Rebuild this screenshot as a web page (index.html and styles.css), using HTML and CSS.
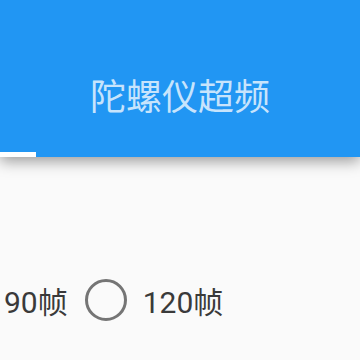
FILE: index.html
```html
<!DOCTYPE html>
<html lang="zh-CN">
<head>
    <meta charset="UTF-8">
    <meta name="viewport" content="width=device-width, initial-scale=1.0">
    <title>陀螺仪超频</title>
    <link rel="stylesheet" href="styles.css">
</head>
<body>
    <div class="appbar">
        <div class="title">陀螺仪超频</div>
        <div class="tabs">
            <div class="indicator"></div>
        </div>
    </div>

    <div class="options">
        <span class="label">90帧</span>
        <span class="radio"></span>
        <span class="label">120帧</span>
    </div>
</body>
</html>
```

FILE: styles.css
```css
html, body {
    margin: 0;
    padding: 0;
}
body {
    width: 360px;
    height: 360px;
    overflow: hidden;
    background-color: #fafafa;
    font-family: Roboto, "Noto Sans CJK SC", sans-serif;
}
.appbar {
    height: 157px;
    display: flex;
    flex-direction: column;
    background-color: #2196f3;
    box-shadow: 0 4px 14px rgba(0, 0, 0, 0.4);
    position: relative;
}
.title {
    flex: 1;
    display: flex;
    align-items: center;
    justify-content: center;
    padding-top: 36px;
    font-size: 36px;
    color: rgba(255, 255, 255, 0.75);
}
.tabs {
    height: 5px;
}
.indicator {
    width: 36px;
    height: 5px;
    background-color: #fff;
}
.options {
    display: flex;
    align-items: center;
    margin-top: 121px;
    padding-left: 4px;
    font-size: 30px;
    color: #3a3a3a;
}
.radio {
    width: 36px;
    height: 36px;
    border: 3.5px solid #757575;
    border-radius: 50%;
    margin: 0 16px 0 17px;
}
```
